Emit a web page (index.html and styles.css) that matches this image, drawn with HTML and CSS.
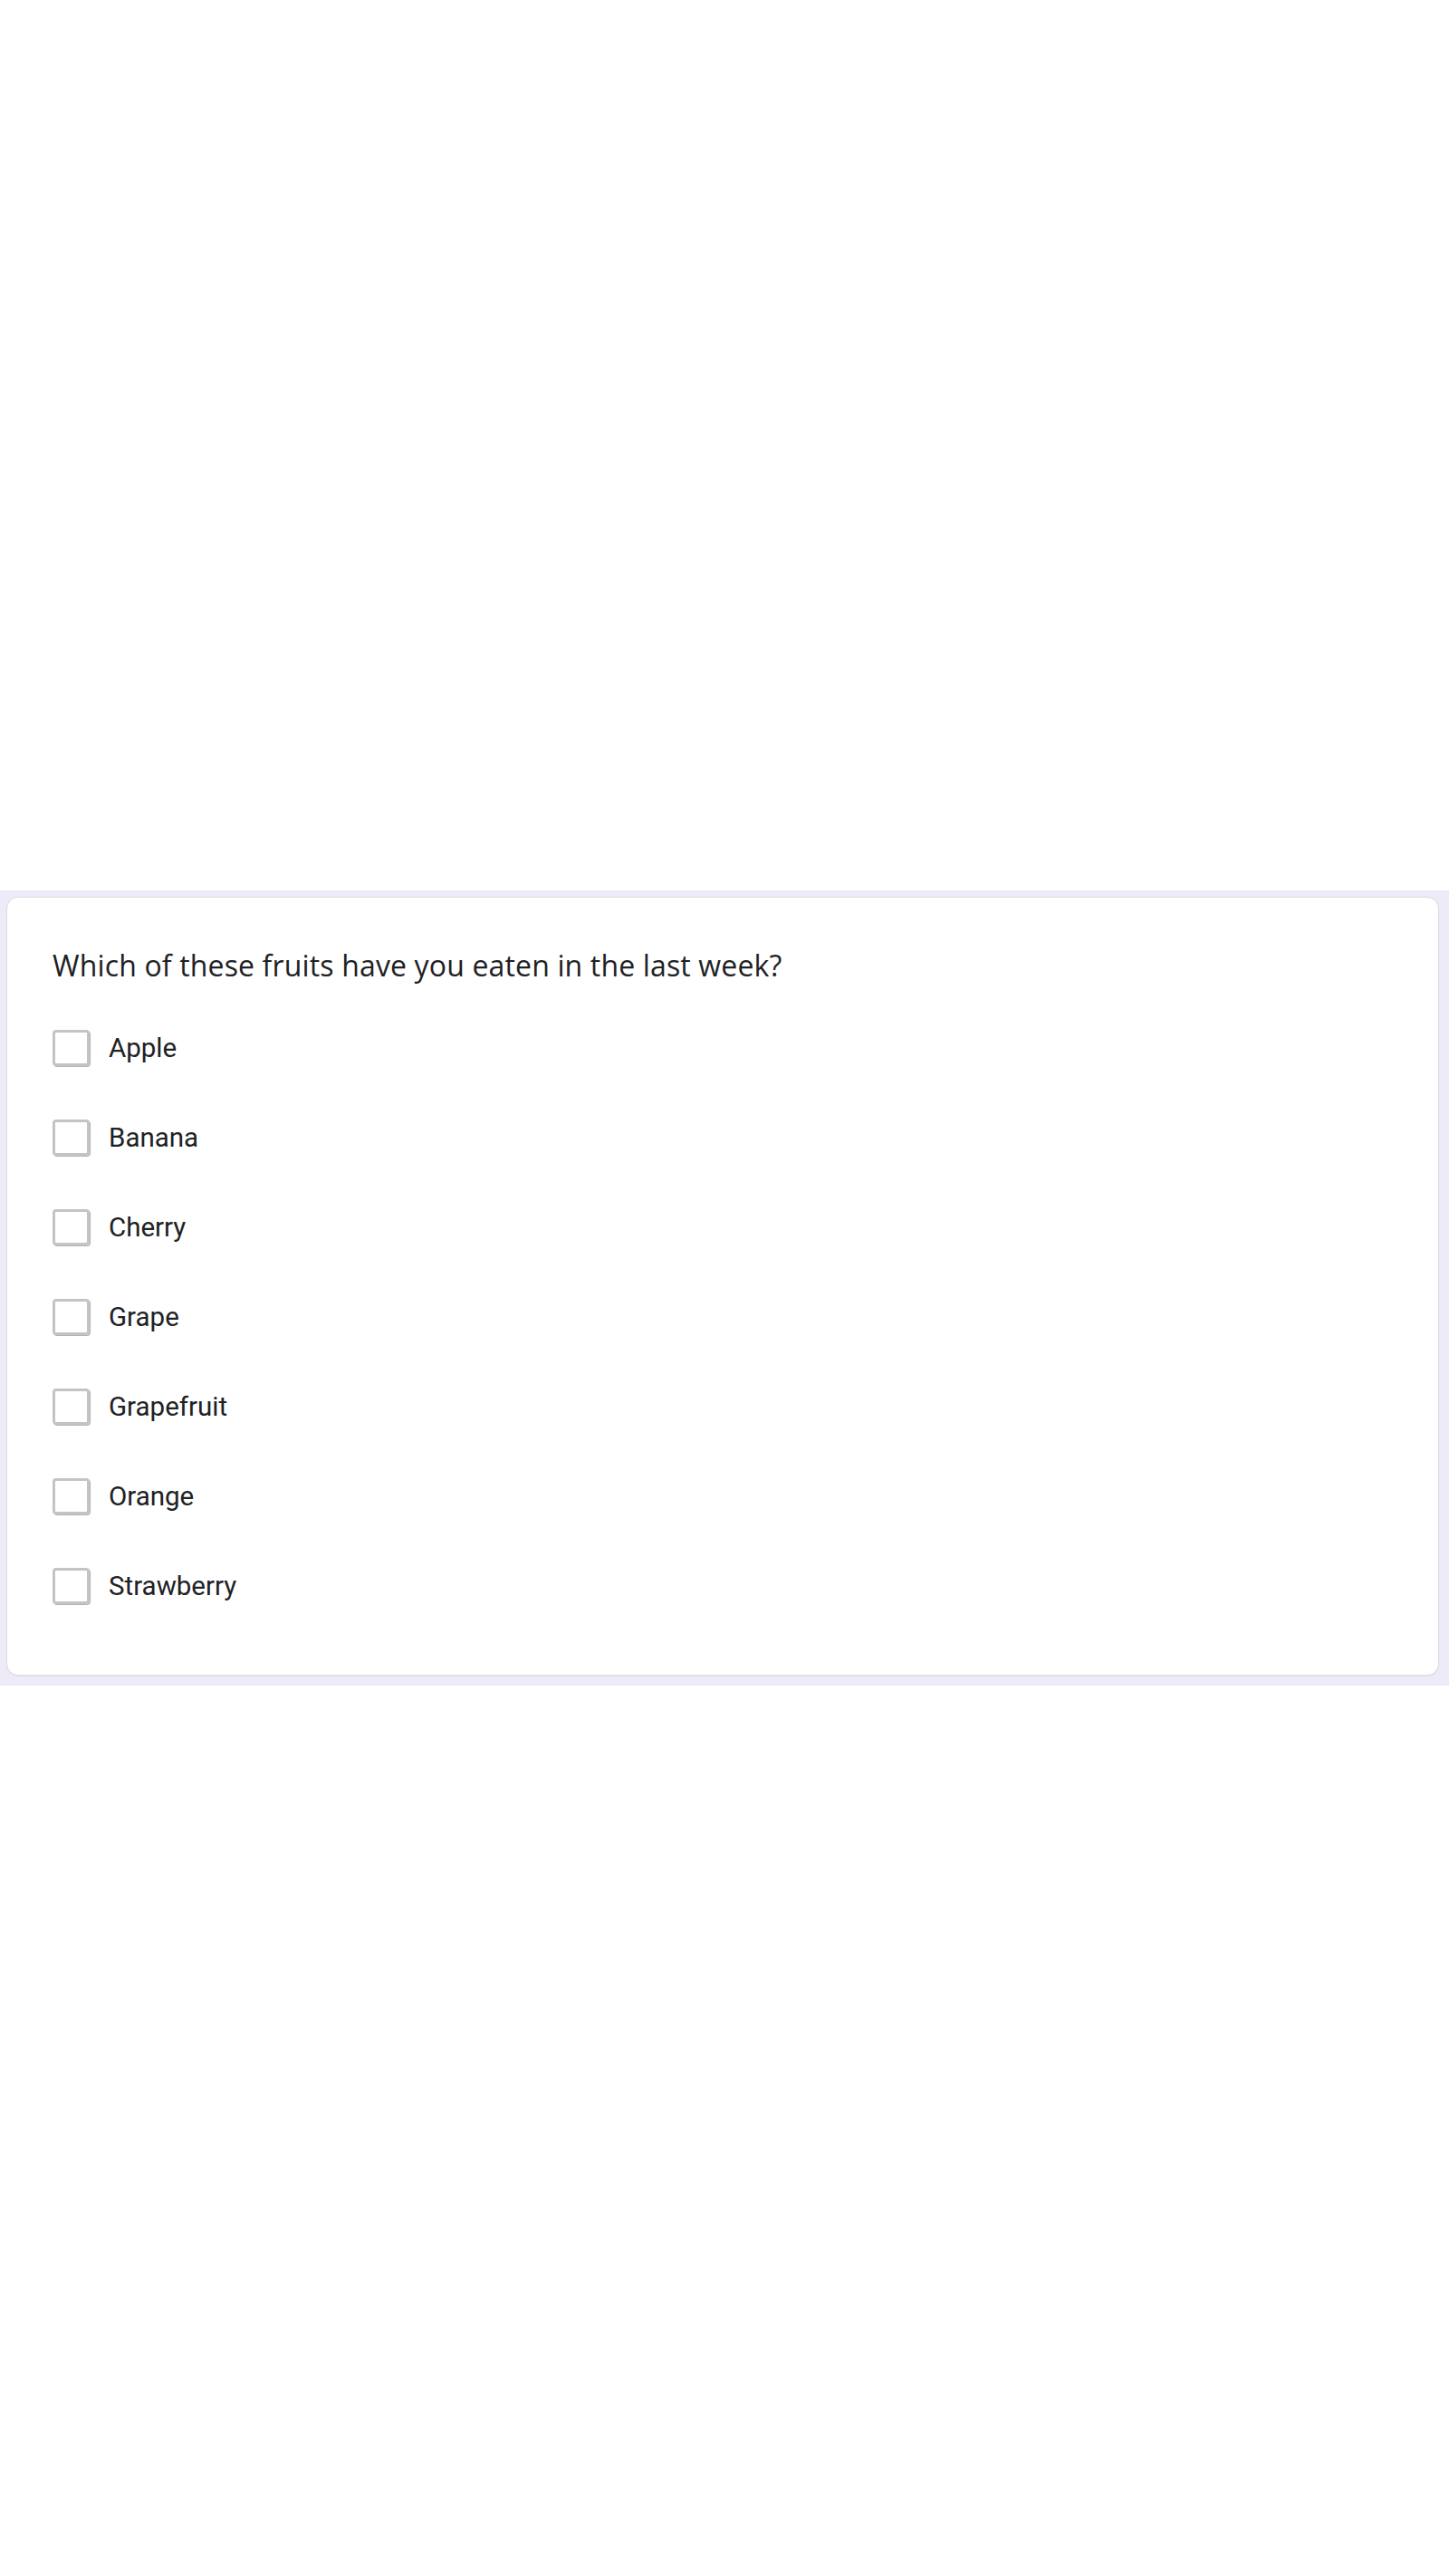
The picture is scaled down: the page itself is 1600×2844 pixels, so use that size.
FILE: index.html
```html
<!DOCTYPE html>
<html lang="en">
<head>
<meta charset="utf-8">
<title>Fruit question</title>
<link rel="stylesheet" href="styles.css">
</head>
<body>
<div class="page">
  <div class="spacer-top"></div>
  <section class="band">
    <div class="card">
      <h2 class="question">Which of these fruits have you eaten in the last week?</h2>
      <ul class="options">
        <li class="option"><span class="box"></span><span class="label">Apple</span></li>
        <li class="option"><span class="box"></span><span class="label">Banana</span></li>
        <li class="option"><span class="box"></span><span class="label">Cherry</span></li>
        <li class="option"><span class="box"></span><span class="label">Grape</span></li>
        <li class="option"><span class="box"></span><span class="label">Grapefruit</span></li>
        <li class="option"><span class="box"></span><span class="label">Orange</span></li>
        <li class="option"><span class="box"></span><span class="label">Strawberry</span></li>
      </ul>
    </div>
  </section>
</div>
</body>
</html>
```
FILE: styles.css
```css
html, body {
  margin: 0;
  padding: 0;
  background: #ffffff;
}

.page {
  width: 1600px;
  min-height: 2844px;
}

.spacer-top {
  height: 983px;
}

.band {
  background: #eeeaf8;
  padding: 7px 11px 11px 7px;
}

.card {
  background: #ffffff;
  border: 1px solid #dcdbe2;
  border-radius: 13px;
  padding: 55px 50px 78px 50px;
  box-shadow: 0 1px 1px rgba(0, 0, 0, 0.04);
}

.question {
  margin: 0 0 51px 0;
  font-family: "Open Sans", "Noto Sans", sans-serif;
  font-weight: 400;
  font-size: 32px;
  letter-spacing: 0.15px;
  line-height: 40px;
  color: #202124;
}

.options {
  list-style: none;
  margin: 0;
  padding: 0;
  display: flex;
  flex-direction: column;
  gap: 59px;
}

.option {
  display: flex;
  align-items: center;
  gap: 21px;
  height: 40px;
}

.box {
  box-sizing: border-box;
  width: 41px;
  height: 40px;
  border: 3px solid #c4c4c4;
  border-radius: 4px;
  box-shadow: 1px 1px 0 #b4b4b4;
}

.label {
  font-family: Roboto, "Liberation Sans", sans-serif;
  font-size: 29.5px;
  line-height: 40px;
  color: #202124;
}
```
